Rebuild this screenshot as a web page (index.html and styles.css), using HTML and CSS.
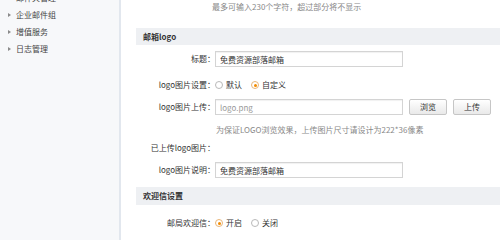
FILE: index.html
```html
<!DOCTYPE html>
<html lang="zh-CN">
<head>
<meta charset="utf-8">
<title>邮箱设置</title>
<link rel="stylesheet" href="styles.css">
</head>
<body>
<div class="layout">
  <aside class="sidebar">
    <ul class="nav">
      <li class="nav-item"><span class="arrow"></span>邮件夹管理</li>
      <li class="nav-item"><span class="arrow"></span>企业邮件组</li>
      <li class="nav-item"><span class="arrow"></span>增值服务</li>
      <li class="nav-item"><span class="arrow"></span>日志管理</li>
    </ul>
  </aside>
  <main class="main">
    <div class="row hint-row"><span class="hint">最多可输入230个字符，超过部分将不显示</span></div>

    <div class="band">邮箱logo</div>
    <div class="row r-title">
      <label class="lbl">标题：</label>
      <input class="input" type="text" value="免费资源部落邮箱">
    </div>
    <div class="row r-set">
      <span class="lbl">logo图片设置：</span>
      <span class="opt"><span class="radio"></span>默认</span>
      <span class="opt"><span class="radio checked"></span>自定义</span>
    </div>
    <div class="row r-upload">
      <span class="lbl">logo图片上传：</span>
      <input class="input muted" type="text" value="logo.png">
      <button class="btn">浏览</button>
      <button class="btn">上传</button>
    </div>
    <div class="row r-help"><span class="help">为保证LOGO浏览效果，上传图片尺寸请设计为222*36像素</span></div>
    <div class="row r-uploaded"><span class="lbl">已上传logo图片：</span></div>
    <div class="row r-desc">
      <span class="lbl">logo图片说明：</span>
      <input class="input" type="text" value="免费资源部落邮箱">
    </div>

    <div class="band band2">欢迎信设置</div>
    <div class="row r-welcome">
      <span class="lbl">邮局欢迎信：</span>
      <span class="opt"><span class="radio checked"></span>开启</span>
      <span class="opt"><span class="radio"></span>关闭</span>
    </div>
  </main>
</div>
</body>
</html>
```
FILE: styles.css
```css
* { box-sizing: border-box; margin: 0; padding: 0; }
html, body { width: 500px; height: 240px; overflow: hidden; background: #fff; }
body {
  font-family: "Noto Sans CJK SC", "Noto Sans", sans-serif;
  font-size: 8px;
  line-height: 1;
  color: #333;
}
.layout { display: flex; height: 240px; }

.sidebar {
  width: 121px;
  flex: none;
  background: #f7f8fa;
  border-right: 2px solid #e2e7ee;
}
.nav { list-style: none; margin-top: -11px; }
.nav-item {
  height: 17px;
  display: flex;
  align-items: center;
  padding-left: 8px;
  color: #444;
}
.arrow {
  width: 0; height: 0;
  border-left: 3px solid #8a8a8a;
  border-top: 2.5px solid transparent;
  border-bottom: 2.5px solid transparent;
  margin-right: 5px;
}

.main { flex: 1; padding-left: 15px; }
.row { display: flex; align-items: center; }
.hint-row { height: 14px; padding-left: 76px; }
.hint, .help { color: #888; }

.band {
  height: 17px;
  margin-top: 14px;
  background: #eef0f3;
  display: flex;
  align-items: center;
  padding-left: 7px;
  font-weight: bold;
  color: #333;
}
.band2 { height: 18px; margin-top: 0; }

.lbl { width: 79px; flex: none; text-align: right; color: #333; }

.r-title { height: 28px; }
.r-set { height: 24px; }
.r-upload { height: 20px; }
.r-help { height: 26px; padding-left: 80px; }
.r-uploaded { height: 10px; }
.r-desc { height: 34px; }
.r-welcome { height: 36px; }

.input {
  width: 188px;
  height: 16px;
  border: 1px solid #d4d4d4;
  box-shadow: inset 0 1px 1px rgba(0,0,0,0.06);
  padding: 0 4px;
  font: inherit;
  color: #333;
  background: #fff;
  outline: none;
}
.input.muted { color: #999; }

.btn {
  width: 38px;
  height: 16px;
  margin-left: 6px;
  border: 1px solid #c6c6c6;
  border-radius: 2px;
  background: linear-gradient(#ffffff, #e9e9e9);
  font: inherit;
  color: #333;
}

.opt { display: flex; align-items: center; margin-right: 9px; color: #333; }
.opt:first-of-type { margin-left: 1px; }
.radio {
  width: 8px; height: 8px;
  border: 1px solid #b9b9b9;
  border-radius: 50%;
  background: #fff;
  margin-right: 3px;
  display: flex;
  align-items: center;
  justify-content: center;
}
.radio.checked { border-color: #e9b679; }
.radio.checked::after {
  content: "";
  width: 3px; height: 3px;
  border-radius: 50%;
  background: #f28b00;
}
```
